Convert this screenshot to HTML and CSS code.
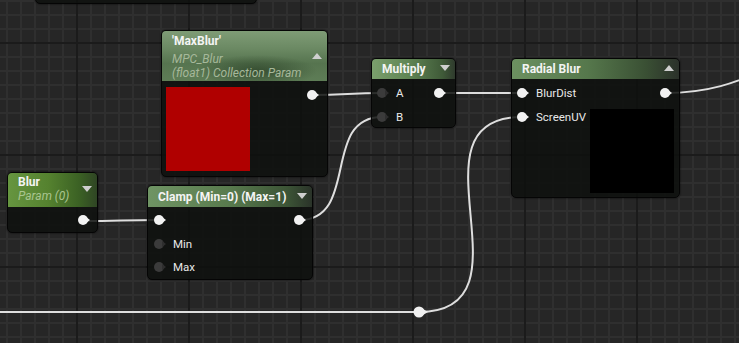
FILE: index.html
```html
<!DOCTYPE html>
<html>
<head>
<meta charset="utf-8">
<link rel="stylesheet" href="styles.css">
</head>
<body>
<div class="canvas">
  <svg class="wires" width="739" height="343" viewBox="0 0 739 343">
    <g fill="none" stroke="#dedede" stroke-width="2" stroke-linecap="round">
      <path d="M312,95 C345,95 350,93 382,93"/>
      <path d="M299,220 C360,220 321,117 382,117"/>
      <path d="M439,93 L522,93"/>
      <path d="M83,221 C120,221 122,220 159,220"/>
      <path d="M665,93 C705,93 735,85 780,62"/>
      <path d="M-5,312 L419,312"/>
      <path d="M419,312 C540,312 401,117 522,117"/>
    </g>
    <circle cx="419" cy="312" r="5.5" fill="#f0f0f0"/>
    <path d="M423,309 L428,312 L423,315 Z" fill="#f0f0f0"/>
  </svg>

  <div class="node n-top"></div>

  <div class="node n-maxblur">
    <div class="header h-maxblur">
      <div class="htext">
        <div class="title">'MaxBlur'</div>
        <div class="sub first">MPC_Blur</div>
        <div class="sub">(float1) Collection Param</div>
      </div>
      <span class="tri up tri-mid"></span>
    </div>
    <div class="body b-maxblur">
      <div class="preview red"></div>
      <span class="pin on pin-maxblur"></span>
    </div>
  </div>

  <div class="node n-multiply">
    <div class="header h-multiply">
      <div class="title">Multiply</div>
      <span class="tri down"></span>
    </div>
    <div class="body b-multiply">
      <div class="row">
        <span class="pin off"></span><span class="label">A</span>
        <span class="pin on out out-multiply"></span>
      </div>
      <div class="row">
        <span class="pin off"></span><span class="label">B</span>
      </div>
    </div>
  </div>

  <div class="node n-radial">
    <div class="header h-radial">
      <div class="title">Radial Blur</div>
      <span class="tri up"></span>
    </div>
    <div class="body b-radial">
      <div class="row">
        <span class="pin on"></span><span class="label">BlurDist</span>
        <span class="pin on out out-radial"></span>
      </div>
      <div class="split">
        <div class="row">
          <span class="pin on"></span><span class="label">ScreenUV</span>
        </div>
        <div class="preview black"></div>
      </div>
    </div>
  </div>

  <div class="node n-blur">
    <div class="header h-blur">
      <div class="htext">
        <div class="title">Blur</div>
        <div class="sub green">Param (0)</div>
      </div>
      <span class="tri down tri-mid"></span>
    </div>
    <div class="body b-blur">
      <div class="row">
        <span class="pin on out out-blur"></span>
      </div>
    </div>
  </div>

  <div class="node n-clamp">
    <div class="header h-clamp">
      <div class="title">Clamp (Min=0) (Max=1)</div>
      <span class="tri down"></span>
    </div>
    <div class="body b-clamp">
      <div class="row">
        <span class="pin on"></span>
        <span class="pin on out out-clamp"></span>
      </div>
      <div class="row">
        <span class="pin off"></span><span class="label">Min</span>
      </div>
      <div class="row">
        <span class="pin off"></span><span class="label">Max</span>
      </div>
    </div>
  </div>
</div>
</body>
</html>
```

FILE: styles.css
```css
* { box-sizing: border-box; }
html, body { margin: 0; padding: 0; }
body {
  width: 739px;
  height: 343px;
  overflow: hidden;
  font-family: Roboto, "Liberation Sans", sans-serif;
}
.canvas {
  position: relative;
  width: 739px;
  height: 343px;
  overflow: hidden;
  background-color: #262626;
  background-image:
    linear-gradient(to right, #1b1b1b 2px, transparent 2px),
    linear-gradient(to bottom, #1b1b1b 2px, transparent 2px),
    linear-gradient(to right, #2f2f2f 2px, transparent 2px),
    linear-gradient(to bottom, #2f2f2f 2px, transparent 2px);
  background-size: 112px 112px, 112px 112px, 14px 14px, 14px 14px;
  background-position: 76px 0, 0 42px, 6px 0, 0 0;
}
.wires {
  position: absolute;
  left: 0;
  top: 0;
}
.node {
  position: absolute;
  background: rgba(14, 16, 14, 0.86);
  border: 1px solid #050505;
  border-radius: 5px;
  box-shadow: 0 0 2px rgba(0,0,0,0.8);
  overflow: hidden;
  display: flex;
  flex-direction: column;
}
.n-top { left: 35px; top: -30px; width: 222px; height: 34px; }
.n-maxblur { left: 161px; top: 30px; width: 167px; }
.n-multiply { left: 371px; top: 58px; width: 85px; }
.n-radial { left: 511px; top: 58px; width: 169px; }
.n-blur { left: 7px; top: 172px; width: 91px; }
.n-clamp { left: 147px; top: 185px; width: 166px; }

.header {
  display: flex;
  align-items: center;
  padding-left: 10px;
  padding-right: 5px;
  height: 20px;
  color: #f4f4f4;
}
.h-multiply { background: linear-gradient(90deg, #7a9f6c 0%, #5f8454 45%, #3f5a38 85%, #2f3a2d 100%); }
.h-radial { background: linear-gradient(90deg, #6c9060 0%, #56784c 45%, #3a5034 80%, #2b312a 100%); }
.h-clamp { height: 21px; background: linear-gradient(90deg, #6f9464 0%, #587a4d 50%, #3c5436 85%, #2a3329 100%); }
.h-maxblur {
  height: 50px;
  align-items: flex-start;
  background:
    radial-gradient(ellipse 60px 16px at 95px 40px, rgba(30,50,28,0.6), transparent),
    linear-gradient(180deg, #7f9c76 0%, #6b8963 35%, #56744f 65%, #5e7d56 100%);
}
.h-blur {
  height: 34px;
  align-items: flex-start;
  background: linear-gradient(90deg, #669540 0%, #55822f 45%, #3b6124 80%, #2f4524 100%);
}
.title {
  font-size: 12px;
  font-weight: 700;
  line-height: 14px;
  white-space: nowrap;
  flex: 1;
}
.htext { flex: 1; padding-top: 3px; }
.h-blur .htext { padding-top: 2px; }
.sub {
  font-size: 12px;
  font-style: italic;
  line-height: 14px;
  color: #a6b89a;
  white-space: nowrap;
}
.sub.first { margin-top: 4px; }
.sub.green { color: #a9c590; }

.tri {
  width: 0;
  height: 0;
  border-left: 5px solid transparent;
  border-right: 5px solid transparent;
  flex: none;
}
.tri.down { border-top: 6px solid #cfcfcf; margin-top: -2px; }
.tri.up { border-bottom: 6px solid #cfcfcf; margin-top: -2px; }
.h-maxblur .tri { margin-top: 22px; }
.h-blur .tri { margin-top: 13px; }

.body { display: flex; flex-direction: column; }
.row {
  display: flex;
  align-items: center;
  height: 20px;
}
.label {
  margin-left: 9px;
  font-size: 11.5px;
  color: #e8e8e8;
  white-space: nowrap;
}
.pin {
  position: relative;
  width: 10px;
  height: 10px;
  border-radius: 50%;
  flex: none;
}
.pin::after {
  content: "";
  position: absolute;
  left: 8px;
  top: 2px;
  border-left: 4px solid;
  border-top: 3px solid transparent;
  border-bottom: 3px solid transparent;
}
.pin.on { background: #f2f2f2; }
.pin.on::after { border-left-color: #f2f2f2; }
.pin.off { background: #3b3b3b; }
.pin.off::after { border-left-color: #2e2e2e; }
.out { margin-left: auto; }

.b-multiply { padding: 4px 0 0 5px; gap: 4px; }
.out-multiply { margin-right: 11px; }

.b-radial { padding: 4px 0 4px 5px; gap: 4px; }
.out-radial { margin-right: 9px; }
.split { display: flex; align-items: flex-start; justify-content: space-between; }
.preview { flex: none; width: 84px; height: 84px; }
.black { background: #000; margin-top: 2px; margin-right: 5px; }
.red { background: #b00000; }

.b-maxblur {
  flex-direction: row;
  align-items: flex-start;
  justify-content: space-between;
  padding: 6px 10px 5px 4px;
}
.pin-maxblur { margin-top: 3px; }

.b-blur { padding: 3px 0 2px 0; }
.out-blur { margin-right: 9px; }

.b-clamp { padding: 3px 0 2px 6px; gap: 3.5px; }
.out-clamp { margin-right: 8px; }
```
